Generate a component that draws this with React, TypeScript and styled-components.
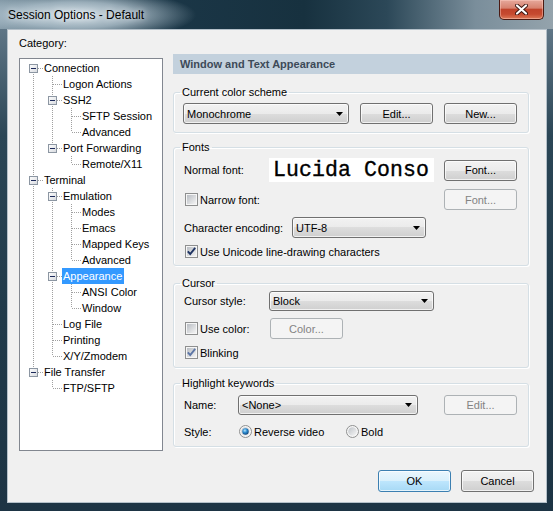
import styled, { createGlobalStyle } from "styled-components";

const GlobalStyle = createGlobalStyle`
  html, body { margin: 0; padding: 0; background: #fff; }
  body {
    font-family: "Liberation Sans", Arial, sans-serif;
    font-size: 11px;
    color: #000;
  }
`;

type TreeNode = { label: string; children?: TreeNode[]; selected?: boolean };

const tree: TreeNode[] = [
  {
    label: "Connection",
    children: [
      { label: "Logon Actions" },
      { label: "SSH2", children: [{ label: "SFTP Session" }, { label: "Advanced" }] },
      { label: "Port Forwarding", children: [{ label: "Remote/X11" }] },
    ],
  },
  {
    label: "Terminal",
    children: [
      {
        label: "Emulation",
        children: [{ label: "Modes" }, { label: "Emacs" }, { label: "Mapped Keys" }, { label: "Advanced" }],
      },
      { label: "Appearance", selected: true, children: [{ label: "ANSI Color" }, { label: "Window" }] },
      { label: "Log File" },
      { label: "Printing" },
      { label: "X/Y/Zmodem" },
    ],
  },
  { label: "File Transfer", children: [{ label: "FTP/SFTP" }] },
];

type FlatRow = {
  label: string;
  guides: boolean[];
  first: boolean;
  last: boolean;
  expander: boolean;
  selected?: boolean;
};

const flatten = (nodes: TreeNode[], guides: boolean[], out: FlatRow[]) => {
  nodes.forEach((n, i) => {
    const last = i === nodes.length - 1;
    out.push({
      label: n.label,
      guides,
      first: guides.length === 0 && i === 0,
      last,
      expander: !!n.children?.length,
      selected: n.selected,
    });
    if (n.children) flatten(n.children, [...guides, !last], out);
  });
  return out;
};

const rows = flatten(tree, [], []);

const dots = { stroke: "#a0a0a0", strokeDasharray: "1 1" };

const Window = styled.div`
  width: 553px;
  height: 511px;
  display: flex;
  flex-direction: column;
  box-sizing: border-box;
  box-shadow: inset 0 0 0 1px rgba(10, 25, 35, 0.6);
  overflow: hidden;
`;

const TitleBar = styled.div`
  height: 29px;
  flex: none;
  display: flex;
  align-items: flex-start;
  padding: 0 9px 0 8px;
  background:
    radial-gradient(ellipse 120px 26px at 76px 15px, rgba(226, 236, 242, 0.96) 0%, rgba(200, 216, 226, 0.7) 50%, rgba(200, 216, 226, 0) 100%),
    linear-gradient(90deg, #728a99 0%, #2f4c5d 9%, #1b3748 26%, #17313f 55%, #2c4858 70%, #7a8e9b 86%, #94a3ac 100%);
`;

const TitleText = styled.div`
  margin-top: 7px;
  font: 12px/16px "Liberation Sans", Arial, sans-serif;
  color: #000;
  text-shadow: 0 0 6px rgba(255, 255, 255, 0.9);
`;

const CloseButton = styled.div`
  margin-left: auto;
  width: 45px;
  height: 20px;
  box-sizing: border-box;
  display: flex;
  align-items: center;
  justify-content: center;
  border: 1px solid #4b1a12;
  border-top: none;
  border-radius: 0 0 5px 5px;
  background: linear-gradient(#e6a89b 0%, #d7826f 42%, #c0432b 50%, #c64a30 75%, #dd7a58 100%);
  box-shadow: inset 0 0 0 1px rgba(255, 210, 200, 0.45);
`;

const Frame = styled.div`
  flex: 1;
  display: flex;
  padding: 0 6px 8px 7px;
  background: linear-gradient(180deg, #5f7686 0%, #2b4656 22%, #203a4a 60%, #1d3444 100%);
`;

const Client = styled.div`
  flex: 1;
  display: flex;
  flex-direction: column;
  background: #f0f0f0;
  border: 1px solid #b4c0c9;
  padding: 7px 12px 10px 11px;
`;

const Body = styled.div`
  display: grid;
  grid-template-columns: 144px 357px;
  column-gap: 10px;
`;

const LeftPane = styled.div`
  display: flex;
  flex-direction: column;
`;

const CategoryLabel = styled.div`
  line-height: 13px;
`;

const TreeBox = styled.div`
  margin-top: 8px;
  height: 393px;
  box-sizing: border-box;
  border: 1px solid #828790;
  background: #fff;
  padding: 1px 0 0 4px;
`;

const TreeRow = styled.div`
  display: flex;
  height: 16px;
`;

const TreeCell = styled.svg`
  flex: none;
  display: block;
  shape-rendering: crispEdges;
`;

const TreeLabel = styled.span<{ $selected?: boolean }>`
  height: 16px;
  line-height: 16px;
  padding: 0 2px 0 1px;
  white-space: nowrap;
  background: ${(p) => (p.$selected ? "#3399ff" : "transparent")};
  color: ${(p) => (p.$selected ? "#fff" : "#000")};
`;

const RightPane = styled.div`
  display: flex;
  flex-direction: column;
  padding-top: 17px;
`;

const PaneHeader = styled.div`
  height: 20px;
  line-height: 20px;
  padding-left: 7px;
  background: #c3d1dd;
  color: #3d4a58;
  font-weight: bold;
`;

const Group = styled.fieldset<{ $mt: number; $pt: number; $pb: number }>`
  margin: ${(p) => p.$mt}px 1px 0 0;
  padding: ${(p) => p.$pt}px 11px ${(p) => p.$pb}px 10px;
  border: 1px solid #d5dfe5;
  border-radius: 3px;
  box-shadow: inset 1px 1px 0 #fff, 1px 1px 0 #fff;
  min-width: 0;
  display: flex;
  flex-direction: column;
`;

const Legend = styled.legend`
  padding: 0 2px;
  margin-left: -4px;
  line-height: 13px;
`;

const Row = styled.div<{ $h: number; $mt?: number }>`
  display: flex;
  align-items: center;
  height: ${(p) => p.$h}px;
  margin-top: ${(p) => p.$mt ?? 0}px;
`;

const FieldLabel = styled.span<{ $w: number }>`
  flex: none;
  width: ${(p) => p.$w}px;
  white-space: nowrap;
`;

const Spacer = styled.div`
  flex: 1;
`;

const Button = styled.button<{ $w?: number; $h?: number; $primary?: boolean; $ml?: number }>`
  flex: none;
  box-sizing: border-box;
  width: ${(p) => p.$w ?? 73}px;
  height: ${(p) => p.$h ?? 21}px;
  margin: 0 0 0 ${(p) => p.$ml ?? 0}px;
  padding: 0;
  font: 11px "Liberation Sans", Arial, sans-serif;
  color: #000;
  border: 1px solid ${(p) => (p.$primary ? "#3c7fb1" : "#707070")};
  border-radius: 3px;
  background: ${(p) =>
    p.$primary
      ? "linear-gradient(#eaf6fd 0%, #d9f0fc 50%, #bee6fd 50%, #a7d9f5 100%)"
      : "linear-gradient(#f2f2f2 0%, #ebebeb 50%, #dddddd 50%, #cfcfcf 100%)"};
  box-shadow: inset 0 0 0 1px rgba(255, 255, 255, 0.7);

  &:disabled {
    border-color: #adb2b5;
    background: #f4f4f4;
    color: #838383;
    box-shadow: none;
  }
`;

const ComboBox = styled.div<{ $w: number; $h?: number; $ml?: number }>`
  flex: none;
  box-sizing: border-box;
  width: ${(p) => p.$w}px;
  height: ${(p) => p.$h ?? 21}px;
  margin-left: ${(p) => p.$ml ?? 0}px;
  display: flex;
  align-items: center;
  justify-content: space-between;
  padding: 0 5px 0 3px;
  border: 1px solid #707070;
  border-radius: 3px;
  background: linear-gradient(#f2f2f2 0%, #ebebeb 50%, #dddddd 50%, #cfcfcf 100%);
  box-shadow: inset 0 0 0 1px rgba(255, 255, 255, 0.7);
`;

const FontPreview = styled.div`
  flex: none;
  width: 165px;
  height: 24px;
  box-sizing: border-box;
  padding-left: 4px;
  background: #fff;
  white-space: nowrap;
  font: 21.5px/24px "Liberation Mono", "DejaVu Sans Mono", monospace;
  letter-spacing: 0.1px;
  -webkit-text-stroke: 0.35px #000;
  color: #000;
`;

const Option = styled.label<{ $w?: number; $ml?: number }>`
  flex: none;
  display: flex;
  align-items: center;
  gap: 2px;
  width: ${(p) => (p.$w ? `${p.$w}px` : "auto")};
  margin-left: ${(p) => p.$ml ?? 0}px;
  white-space: nowrap;
`;

const Footer = styled.div`
  display: flex;
  justify-content: flex-end;
  gap: 10px;
  margin-top: 19px;
`;

const CloseGlyph = () => (
  <svg width="13" height="11" viewBox="0 0 13 11">
    <path d="M2 1.5 L11 9.5 M11 1.5 L2 9.5" stroke="#3a1510" strokeWidth="4" strokeLinecap="round" />
    <path d="M2 1.5 L11 9.5 M11 1.5 L2 9.5" stroke="#fff" strokeWidth="2.2" strokeLinecap="round" />
  </svg>
);

const Arrow = () => (
  <svg width="7" height="4" viewBox="0 0 7 4">
    <path d="M0 0 H7 L3.5 4 Z" fill="#000" />
  </svg>
);

const Select = ({ value, w, h, ml }: { value: string; w: number; h?: number; ml?: number }) => (
  <ComboBox $w={w} $h={h} $ml={ml}>
    <span>{value}</span>
    <Arrow />
  </ComboBox>
);

const CheckBox = ({ checked, muted }: { checked?: boolean; muted?: boolean }) => (
  <svg width="13" height="13" viewBox="0 0 13 13">
    <defs>
      <linearGradient id="cbFill" x1="0" y1="0" x2="1" y2="1">
        <stop offset="0" stopColor="#b9bdc3" />
        <stop offset="1" stopColor="#f4f4f4" />
      </linearGradient>
    </defs>
    <rect x="0.5" y="0.5" width="12" height="12" fill="#f6f6f6" stroke="#8e8f8f" />
    <rect x="2" y="2" width="9" height="9" fill="url(#cbFill)" />
    {checked && (
      <path
        d="M2.8 6.4 L5.2 9 L10.2 2.8"
        fill="none"
        stroke={muted ? "#5d76a6" : "#1f3463"}
        strokeWidth="1.9"
      />
    )}
  </svg>
);

const RadioDot = ({ checked }: { checked?: boolean }) => (
  <svg width="13" height="13" viewBox="0 0 13 13">
    <defs>
      <linearGradient id="rbFill" x1="0" y1="0" x2="1" y2="1">
        <stop offset="0" stopColor="#bfc3c8" />
        <stop offset="1" stopColor="#f6f6f6" />
      </linearGradient>
      <radialGradient id="rbDot" cx="0.4" cy="0.35" r="0.7">
        <stop offset="0" stopColor="#b9e5fb" />
        <stop offset="0.45" stopColor="#2f8fd3" />
        <stop offset="1" stopColor="#0d3f74" />
      </radialGradient>
    </defs>
    <circle cx="6.5" cy="6.5" r="6" fill="#f6f6f6" stroke="#8e8f8f" />
    <circle cx="6.5" cy="6.5" r="4.3" fill="url(#rbFill)" />
    {checked && <circle cx="6.5" cy="6.5" r="3.2" fill="url(#rbDot)" />}
  </svg>
);

const Connector = ({ row }: { row: FlatRow }) => (
  <TreeCell width="19" height="16" viewBox="0 0 19 16">
    {!row.first && <line x1="9.5" y1="0" x2="9.5" y2="8" {...dots} />}
    {!row.last && <line x1="9.5" y1="8" x2="9.5" y2="16" {...dots} />}
    <line x1="10" y1="8.5" x2="19" y2="8.5" {...dots} />
    {row.expander && (
      <g>
        <defs>
          <linearGradient id="exFill" x1="0" y1="0" x2="1" y2="1">
            <stop offset="0" stopColor="#ffffff" />
            <stop offset="1" stopColor="#d6d9de" />
          </linearGradient>
        </defs>
        <rect x="5.5" y="4.5" width="8" height="8" fill="url(#exFill)" stroke="#8c96a2" />
        <line x1="7" y1="8.5" x2="12" y2="8.5" stroke="#1d2a5a" />
      </g>
    )}
  </TreeCell>
);

const Tree = () => (
  <TreeBox>
    {rows.map((row, i) => (
      <TreeRow key={i}>
        {row.guides.map((on, j) => (
          <TreeCell key={j} width="19" height="16" viewBox="0 0 19 16">
            {on && <line x1="9.5" y1="0" x2="9.5" y2="16" {...dots} />}
          </TreeCell>
        ))}
        <Connector row={row} />
        <TreeLabel $selected={row.selected}>{row.label}</TreeLabel>
      </TreeRow>
    ))}
  </TreeBox>
);

const App = () => {
  return (
    <>
      <GlobalStyle />
      <Window>
        <TitleBar>
          <TitleText>Session Options - Default</TitleText>
          <CloseButton>
            <CloseGlyph />
          </CloseButton>
        </TitleBar>
        <Frame>
          <Client>
            <Body>
              <LeftPane>
                <CategoryLabel>Category:</CategoryLabel>
                <Tree />
              </LeftPane>
              <RightPane>
                <PaneHeader>Window and Text Appearance</PaneHeader>

                <Group $mt={12} $pt={4} $pb={8}>
                  <Legend>Current color scheme</Legend>
                  <Row $h={21}>
                    <Select value="Monochrome" w={166} ml={-1} />
                    <Button $ml={11}>Edit...</Button>
                    <Button $ml={11}>New...</Button>
                  </Row>
                </Group>

                <Group $mt={8} $pt={4} $pb={6}>
                  <Legend>Fonts</Legend>
                  <Row $h={24}>
                    <FieldLabel $w={85}>Normal font:</FieldLabel>
                    <FontPreview>Lucida Conso</FontPreview>
                    <Spacer />
                    <Button>Font...</Button>
                  </Row>
                  <Row $h={21} $mt={7}>
                    <Option $ml={1}>
                      <CheckBox />
                      Narrow font:
                    </Option>
                    <Spacer />
                    <Button disabled>Font...</Button>
                  </Row>
                  <Row $h={21} $mt={7}>
                    <FieldLabel $w={108}>Character encoding:</FieldLabel>
                    <Select value="UTF-8" w={134} />
                  </Row>
                  <Row $h={15} $mt={6}>
                    <Option $ml={1}>
                      <CheckBox checked />
                      Use Unicode line-drawing characters
                    </Option>
                  </Row>
                </Group>

                <Group $mt={11} $pt={1} $pb={7}>
                  <Legend>Cursor</Legend>
                  <Row $h={20}>
                    <FieldLabel $w={85}>Cursor style:</FieldLabel>
                    <Select value="Block" w={165} h={20} />
                  </Row>
                  <Row $h={21} $mt={7}>
                    <Option $w={85} $ml={1}>
                      <CheckBox />
                      Use color:
                    </Option>
                    <Button disabled>Color...</Button>
                  </Row>
                  <Row $h={15} $mt={6}>
                    <Option $ml={1}>
                      <CheckBox checked muted />
                      Blinking
                    </Option>
                  </Row>
                </Group>

                <Group $mt={9} $pt={5} $pb={7}>
                  <Legend>Highlight keywords</Legend>
                  <Row $h={20}>
                    <FieldLabel $w={54}>Name:</FieldLabel>
                    <Select value="<None>" w={180} h={20} />
                    <Spacer />
                    <Button disabled $h={20}>
                      Edit...
                    </Button>
                  </Row>
                  <Row $h={15} $mt={9}>
                    <FieldLabel $w={55}>Style:</FieldLabel>
                    <Option $w={107}>
                      <RadioDot checked />
                      Reverse video
                    </Option>
                    <Option>
                      <RadioDot />
                      Bold
                    </Option>
                  </Row>
                </Group>
              </RightPane>
            </Body>
            <Footer>
              <Button $primary $h={22}>
                OK
              </Button>
              <Button $h={22}>Cancel</Button>
            </Footer>
          </Client>
        </Frame>
      </Window>
    </>
  );
};

export default App;
